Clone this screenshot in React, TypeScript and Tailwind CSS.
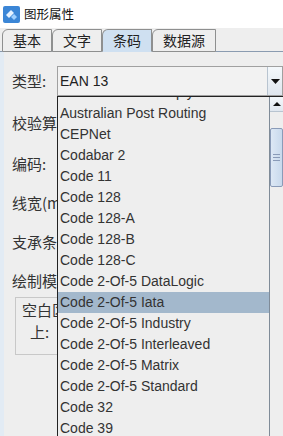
import React from 'react';

const items = [
  'Australian Post Reply Paid',
  'Australian Post Routing',
  'CEPNet',
  'Codabar 2',
  'Code 11',
  'Code 128',
  'Code 128-A',
  'Code 128-B',
  'Code 128-C',
  'Code 2-Of-5 DataLogic',
  'Code 2-Of-5 Iata',
  'Code 2-Of-5 Industry',
  'Code 2-Of-5 Interleaved',
  'Code 2-Of-5 Matrix',
  'Code 2-Of-5 Standard',
  'Code 32',
  'Code 39',
];

const cjk = "font-['Noto_Sans_CJK_SC','Noto_Sans',sans-serif]";

function Tab({ label, active }: { label: string; active?: boolean }) {
  return (
    <div
      className={
        'h-[23px] px-[10px] flex items-center text-[14px] text-[#222] border border-[#8e8f8f] rounded-tl-[6px] -mb-px ' +
        (active ? 'bg-[#cfe0f1] border-b-[#cfe0f1]' : 'bg-[#eeeeee]')
      }
    >
      {label}
    </div>
  );
}

export default function App() {
  const labels = ['类型:', '校验算法:', '编码:', '线宽(mm):', '支承条:', '绘制模式:'];

  return (
    <div className={`relative w-[283px] h-[436px] overflow-hidden bg-[#eeeeee] ${cjk}`}>
      {/* title bar */}
      <div className="h-[28px] bg-white flex items-center gap-[4px] px-[3px]">
        <svg width="17" height="17" viewBox="0 0 17 17">
          <rect x="0" y="0" width="17" height="17" rx="2" fill="#3b86d6" />
          <path d="M3 9 L8 4 L11 7 L6 12 Z" fill="#e6f2ff" />
          <path d="M8 11 L11 8 L14 11 L11 14 Z" fill="#9fd0ff" />
        </svg>
        <span className="text-[12.5px] text-[#111]">图形属性</span>
      </div>

      {/* tabs */}
      <div className="h-[24px] flex items-end pl-[2px] border-b border-[#8a9bb0]">
        <Tab label="基本" />
        <Tab label="文字" />
        <Tab label="条码" active />
        <Tab label="数据源" />
      </div>

      {/* content */}
      <div className="flex border-l-[4px] border-[#e2ebf4] h-full">
        <div className="flex flex-col pl-[8px] pt-[14px] w-full">
          <div className="flex items-center h-[30px] gap-[7px]">
            <span className="text-[15px] text-[#333] w-[38px]">{labels[0]}</span>
            <div className="flex-1 h-[30px] flex border border-[#a0a0a0] bg-[#f2f2f2]">
              <span className="flex-1 flex items-center pl-[2px] text-[14px] text-[#222] font-['Liberation_Sans',sans-serif]">
                EAN 13
              </span>
              <div className="w-[15px] flex items-center justify-center bg-gradient-to-b from-[#f4f8fb] to-[#dfe6ee] border-l border-[#b8c4d0]">
                <svg width="9" height="5" viewBox="0 0 9 5">
                  <path d="M0 0 H9 L4.5 5 Z" fill="#111" />
                </svg>
              </div>
            </div>
          </div>
          {labels.slice(1).map((l, i) => (
            <div
              key={l}
              className={
                'text-[15px] text-[#333] whitespace-nowrap leading-[20px] ' +
                (i === 0 ? 'mt-[17px]' : i === 1 ? 'mt-[21px]' : 'mt-[19px]')
              }
            >
              {l}
            </div>
          ))}
          <div className="mt-[6px] ml-[3px] w-[70px] h-[58px] border border-[#c8c8c8] border-r-0 pt-[2px]">
            <div className="pl-[6px] text-[15px] text-[#333] leading-[20px]">空白区</div>
            <div className="pl-[14px] mt-[2px] text-[15px] text-[#333] leading-[20px]">上:</div>
          </div>
        </div>
      </div>

      {/* dropdown list */}
      <div className="absolute left-[57px] top-[96px] w-[226px] h-[340px] flex border-l border-t border-[#222] bg-[#eeeeee]">
        <div className="flex-1 overflow-hidden font-['Liberation_Sans',sans-serif]">
          <div className="mt-[-15px]">
            {items.map((it) => (
              <div
                key={it}
                className={
                  'h-[21px] flex items-center pl-[2px] text-[14px] text-[#333] whitespace-nowrap ' +
                  (it === 'Code 2-Of-5 Iata' ? 'bg-[#a3b8cc]' : '')
                }
              >
                {it}
              </div>
            ))}
          </div>
        </div>
        <div className="w-[14px] flex flex-col border-l border-[#7f8b98] bg-[#eeeeee]">
          <div className="h-[15px] flex items-center justify-center border-b border-[#b8c4d0] bg-gradient-to-b from-[#f4f8fb] to-[#e0e7ef]">
            <svg width="8" height="4" viewBox="0 0 8 4">
              <path d="M0 4 H8 L4 0 Z" fill="#111" />
            </svg>
          </div>
          <div className="h-[16px]" />
          <div className="h-[59px] flex items-center justify-center border border-[#8a9bb8] rounded-[2px] bg-gradient-to-r from-[#dde8f5] to-[#c8d9ec]">
            <div className="flex flex-col gap-[2px]">
              <div className="w-[7px] h-px bg-[#8a9bb8]" />
              <div className="w-[7px] h-px bg-[#8a9bb8]" />
              <div className="w-[7px] h-px bg-[#8a9bb8]" />
            </div>
          </div>
        </div>
      </div>
    </div>
  );
}
